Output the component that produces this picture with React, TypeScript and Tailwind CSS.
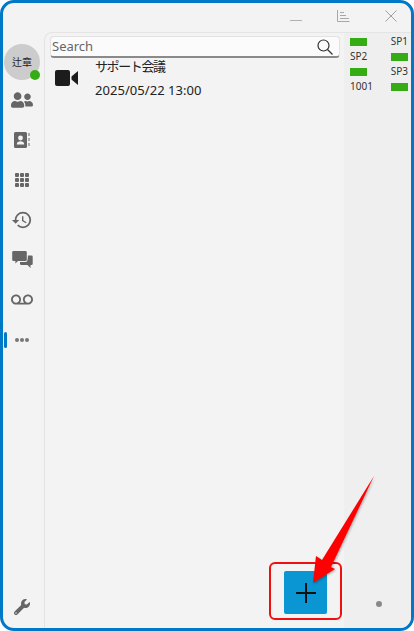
import React from "react";
import { FaUserFriends, FaWrench } from "react-icons/fa";
import { MdHistory, MdVoicemail } from "react-icons/md";

const font = { fontFamily: "'Noto Sans', 'Noto Sans CJK JP', sans-serif" };

function ContactsIcon() {
  return (
    <svg width="20" height="20" viewBox="0 0 20 20" fill="#666">
      <rect x="2" y="2" width="13" height="16" rx="1.5" />
      <circle cx="8.5" cy="8" r="2.4" fill="#f3f3f3" />
      <path d="M4.8 14.5c0-2.2 1.6-3.2 3.7-3.2s3.7 1 3.7 3.2z" fill="#f3f3f3" />
      <rect x="16.5" y="3" width="1" height="3" />
      <rect x="16.5" y="8" width="1" height="3" />
      <rect x="16.5" y="13" width="1" height="3" />
    </svg>
  );
}

function DialpadIcon() {
  const cells = [0, 1, 2, 3, 4, 5, 6, 7, 8];
  return (
    <div className="grid w-[15px] grid-cols-3 gap-[1px]">
      {cells.map((c) => (
        <div key={c} className="h-[4px] w-[4px] rounded-[1px] bg-[#666]" />
      ))}
    </div>
  );
}

function ChatIcon() {
  return (
    <svg width="21" height="20" viewBox="0 0 21 20" fill="#666">
      <path d="M1.5 1h12a1.3 1.3 0 0 1 1.3 1.3v7.4a1.3 1.3 0 0 1-1.3 1.3H6l-2.6 2.4V11H1.5A1.3 1.3 0 0 1 .2 9.700V2.300A1.300 1.300 0 0 1 1.500 1z" />
      <path d="M16 5.500h3.500a1.200 1.200 0 0 1 1.200 1.200v7.100a1.200 1.200 0 0 1-1.200 1.200h-1v3l-3-3h-6.300a1.200 1.200 0 0 1-1.200-1.200v-1.700h5.500a2 2 0 0 0 2-2z" />
    </svg>
  );
}

function RailItem({ children }: { children: React.ReactNode }) {
  return <div className="flex h-[40px] items-center justify-center text-[#666]">{children}</div>;
}

function StatusRow({ left, right }: { left: React.ReactNode; right: React.ReactNode }) {
  return (
    <div className="flex h-[15px] items-center justify-between text-[10px] text-[#333]">
      {left}
      {right}
    </div>
  );
}

const Bar = () => <div className="h-[8px] w-[17px] bg-[#35ac14]" />;

export default function App() {
  return (
    <div className="relative h-[631px] w-[414px] bg-white" style={font}>
      <div className="flex h-full flex-col overflow-hidden rounded-[14px] border-[3px] border-[#0078c8] bg-[#f3f3f3]">
        {/* title bar */}
        <div className="flex h-[29px] shrink-0">
          <div className="flex-1" />
          <div className="mr-[14px] mt-[7px] flex h-[12px] items-start gap-[35px]">
            <div className="mt-[10px] h-[1px] w-[12px] bg-[#b0b0b0]" />
            <svg width="13" height="12" viewBox="0 0 13 12" fill="none" stroke="#a8a8a8" strokeWidth="1">
              <path d="M.5 0v11.500h12M3 2.500h4M3 5.500h6M3 8.500h9" />
            </svg>
            <svg width="12" height="12" viewBox="0 0 12 12" fill="none" stroke="#a0a0a0" strokeWidth="1">
              <path d="M.5.500l11 11M11.500.500l-11 11" />
            </svg>
          </div>
        </div>

        <div className="flex min-h-0 flex-1">
          {/* left rail */}
          <div className="relative flex w-[41px] shrink-0 flex-col items-center pr-[3px]">
            <div className="relative mt-[12px] flex h-[36px] w-[36px] items-center justify-center rounded-full bg-[#cccccc] text-[10px] text-[#222]">
              辻章
              <div className="absolute bottom-0 right-0 h-[10px] w-[10px] rounded-full bg-[#35ac14]" />
            </div>
            <div className="w-full">
              <RailItem><FaUserFriends size={22} /></RailItem>
              <RailItem><ContactsIcon /></RailItem>
              <RailItem><DialpadIcon /></RailItem>
              <RailItem><MdHistory size={22} /></RailItem>
              <RailItem><ChatIcon /></RailItem>
              <RailItem><MdVoicemail size={22} /></RailItem>
              <RailItem>
                <div className="flex gap-[1px]">
                  <div className="h-[4px] w-[4px] rounded-full bg-[#777]" />
                  <div className="h-[4px] w-[4px] rounded-full bg-[#777]" />
                  <div className="h-[4px] w-[4px] rounded-full bg-[#777]" />
                </div>
              </RailItem>
            </div>
            <div className="flex-1" />
            <div className="mb-[13px] text-[#666]">
              <FaWrench size={16} />
            </div>
            <div className="absolute left-[1px] top-[300px] h-[16px] w-[3px] rounded-full bg-[#0078c8]" />
          </div>

          {/* main area */}
          <div className="flex min-w-0 flex-1 rounded-tl-[8px] border-l border-t border-[#e4e4e4]">
            <div className="flex w-[299px] shrink-0 flex-col">
              <div className="ml-[5px] mr-[4px] mt-[3px] flex h-[22px] items-center justify-between rounded-[4px] border border-b-2 border-[#e2e2e2] border-b-[#8a8a8a] bg-[#fbfbfb] pl-[1px] pr-[6px]">
                <span className="text-[13px] text-[#666]">Search</span>
                <svg width="16" height="16" viewBox="0 0 16 16" fill="none" stroke="#333" strokeWidth="1.200">
                  <circle cx="6.500" cy="6.500" r="5.500" />
                  <path d="M10.500 10.500l5 5" />
                </svg>
              </div>
              <div className="flex h-[48px] shrink-0">
                <div className="ml-[10px] mt-[12px] w-[40px] shrink-0">
                  <svg width="23" height="16" viewBox="0 0 23 16" fill="#1c1c1c">
                    <rect x="0" y="0" width="15" height="16" rx="2" />
                    <path d="M16.500 6.500L23 1v14l-6.500-5.500z" />
                  </svg>
                </div>
                <div className="flex flex-col">
                  <div className="h-[21px] text-[13px] leading-[17px] tracking-[-1.4px] text-[#222]">サポート会議</div>
                  <div className="text-[13px] leading-[22px] tracking-[0.05px] text-[#222]">2025/05/22 13:00</div>
                </div>
              </div>
              <div className="flex-1" />
              <div className="mb-[14px] ml-[239px] flex h-[43px] w-[43px] items-center justify-center rounded-[2px] bg-[#0a96d2]">
                <svg width="20" height="20" viewBox="0 0 20 20" stroke="#111" strokeWidth="2">
                  <path d="M10 0v20M0 10h20" />
                </svg>
              </div>
            </div>

            {/* status panel */}
            <div className="flex min-w-0 flex-1 flex-col bg-[#efefef] pl-[6px] pr-[3px] pt-[1px]">
              <StatusRow left={<Bar />} right={<span>SP1</span>} />
              <StatusRow left={<span>SP2</span>} right={<Bar />} />
              <StatusRow left={<Bar />} right={<span>SP3</span>} />
              <StatusRow left={<span>1001</span>} right={<Bar />} />
              <div className="flex-1" />
              <div className="mb-[21px] ml-[26px] h-[6px] w-[6px] rounded-full bg-[#888]" />
            </div>
          </div>
        </div>
      </div>

      {/* annotation drawn over the screenshot */}
      <div className="absolute left-[269px] top-[562px] h-[58px] w-[73px] rounded-[6px] border-2 border-[#f01010]" />
      <svg className="absolute left-0 top-0 drop-shadow-[1px_1px_1px_rgba(0,0,0,0.3)]" width="414" height="631" fill="#ff0000">
        <polygon points="374,476 331,567 335,569 313,583 316,556 322,560" />
      </svg>
    </div>
  );
}
